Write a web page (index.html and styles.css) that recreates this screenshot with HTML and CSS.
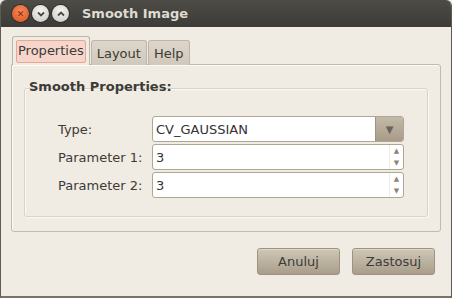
FILE: index.html
```html
<!DOCTYPE html>
<html lang="en">
<head>
  <meta charset="UTF-8" />
  <title>Smooth Image</title>
  <link rel="stylesheet" href="styles.css">
</head>
<body>

<div class="window">
  <div class="titlebar">
    <div class="controls">
      <span class="ctl close">&#x2715;</span>
      <span class="ctl">
        <svg width="10" height="10" viewBox="0 0 10 10"><path d="M2 3.5 L5 6.5 L8 3.5" fill="none" stroke="#4a4944" stroke-width="1.8"/></svg>
      </span>
      <span class="ctl">
        <svg width="10" height="10" viewBox="0 0 10 10"><path d="M2 6.5 L5 3.5 L8 6.5" fill="none" stroke="#4a4944" stroke-width="1.8"/></svg>
      </span>
    </div>
    <div class="title">Smooth Image</div>
  </div>

  <div class="content">
    <div class="notebook">
      <div class="tabs">
        <div class="tab active"><span class="focus">Properties</span></div>
        <div class="tab">Layout</div>
        <div class="tab">Help</div>
      </div>
      <div class="panel">
        <div class="frame-title">Smooth Properties:</div>
        <div class="frame">
          <div class="row">
            <label>Type:</label>
            <div class="combo">
              <span class="value">CV_GAUSSIAN</span>
              <span class="combo-btn">&#9660;</span>
            </div>
          </div>
          <div class="row">
            <label>Parameter 1:</label>
            <div class="spin">
              <span class="value">3</span>
              <span class="arrows"><i>&#9650;</i><i>&#9660;</i></span>
            </div>
          </div>
          <div class="row">
            <label>Parameter 2:</label>
            <div class="spin">
              <span class="value">3</span>
              <span class="arrows"><i>&#9650;</i><i>&#9660;</i></span>
            </div>
          </div>
        </div>
      </div>
    </div>

    <div class="actions">
      <button>Anuluj</button>
      <button>Zastosuj</button>
    </div>
  </div>
</div>

</body>
</html>
```

FILE: styles.css
```css
body {
  margin: 0;
  background: #f0ece5;
  font-family: "DejaVu Sans", sans-serif;
  font-size: 13px;
  color: #3c3b37;
}
.window {
  width: 452px;
  height: 298px;
  box-sizing: border-box;
  background: #f0ebe3;
  border: 1px solid #5e5b55;
  border-top: none;
  border-bottom: 2px solid #77736a;
  border-radius: 6px 6px 0 0;
  overflow: hidden;
  display: flex;
  flex-direction: column;
}
.titlebar {
  height: 27px;
  background: linear-gradient(#4d4c47, #3c3b37);
  display: flex;
  align-items: center;
  padding-left: 11px;
}
.controls {
  display: flex;
  gap: 3px;
}
.ctl {
  width: 17px;
  height: 17px;
  border-radius: 50%;
  background: radial-gradient(circle at 50% 35%, #f6f5f2, #c9c6bf);
  display: flex;
  align-items: center;
  justify-content: center;
  font-size: 9px;
  box-shadow: 0 0 0 1px #2f2e2a;
}
.ctl.close {
  background: radial-gradient(circle at 50% 35%, #f7875a, #d9531e);
  color: #7a2a10;
  font-weight: bold;
}
.title {
  margin-left: 13px;
  color: #dfdbd2;
  font-weight: bold;
  font-size: 13px;
}
.content {
  flex: 1;
  padding: 9px 10px 0 10px;
  display: flex;
  flex-direction: column;
}
.notebook {
  display: flex;
  flex-direction: column;
}
.tabs {
  display: flex;
  align-items: flex-end;
  padding-left: 1px;
  margin-bottom: -1px;
  position: relative;
  z-index: 1;
}
.tab {
  height: 24px;
  padding: 0 5px;
  display: flex;
  align-items: center;
  background: linear-gradient(#ddd6ca, #d0c8bb);
  border: 1px solid #bdb5a7;
  border-bottom: none;
  border-radius: 3px 3px 0 0;
  margin-right: 1px;
}
.tab.active {
  height: 28px;
  padding: 0 3px;
  background: #f0ebe3;
  border-color: #bdb5a7;
}
.focus {
  display: block;
  padding: 2px 1px 3px;
  background: #f6d6cb;
  border: 1px solid #e8a696;
  border-radius: 2px;
  line-height: 16px;
}
.panel {
  height: 168px;
  border: 1px solid #c2bbad;
  border-radius: 0 3px 3px 3px;
  box-shadow: inset 1px 1px 0 #fbf9f5;
  padding: 14px 12px 0 12px;
  box-sizing: border-box;
}
.frame-title {
  font-weight: bold;
  padding-left: 5px;
  line-height: 16px;
}
.frame {
  margin-top: -7px;
  height: 129px;
  box-sizing: border-box;
  border: 1px solid #d9d3c7;
  border-radius: 3px;
  box-shadow: inset 1px 1px 0 #fbf9f5, 1px 1px 0 #fbf9f5;
  padding: 27px 0 0 33px;
  display: flex;
  flex-direction: column;
  gap: 2px;
}
.row {
  display: flex;
  align-items: center;
  height: 26px;
}
.row label {
  width: 94px;
}
.combo, .spin {
  width: 252px;
  height: 26px;
  box-sizing: border-box;
  background: #fff;
  border: 1px solid #aea794;
  border-radius: 3px;
  display: flex;
  align-items: center;
  overflow: hidden;
}
.value {
  flex: 1;
  padding-left: 3px;
  color: #333;
}
.combo-btn {
  width: 27px;
  height: 100%;
  background: linear-gradient(#c3b9a8, #a89c88);
  border-left: 1px solid #9d927f;
  color: #6a6357;
  font-size: 10px;
  display: flex;
  align-items: center;
  justify-content: center;
}
.arrows {
  width: 13px;
  height: 100%;
  display: flex;
  flex-direction: column;
  justify-content: space-around;
  align-items: center;
  font-size: 7px;
  color: #8b8579;
  border-left: 1px solid #f0ede6;
}
.arrows i {
  font-style: normal;
  line-height: 9px;
}
.actions {
  display: flex;
  justify-content: flex-end;
  gap: 12px;
  padding-right: 6px;
  margin-top: 16px;
}
.actions button {
  width: 83px;
  height: 27px;
  font-family: "DejaVu Sans", sans-serif;
  font-size: 13px;
  color: #3c3b37;
  background: linear-gradient(#cfc6b6, #a99e8b);
  border: 1px solid #9e937f;
  border-radius: 3px;
  box-shadow: inset 0 1px 0 #ddd6c8;
}
```
